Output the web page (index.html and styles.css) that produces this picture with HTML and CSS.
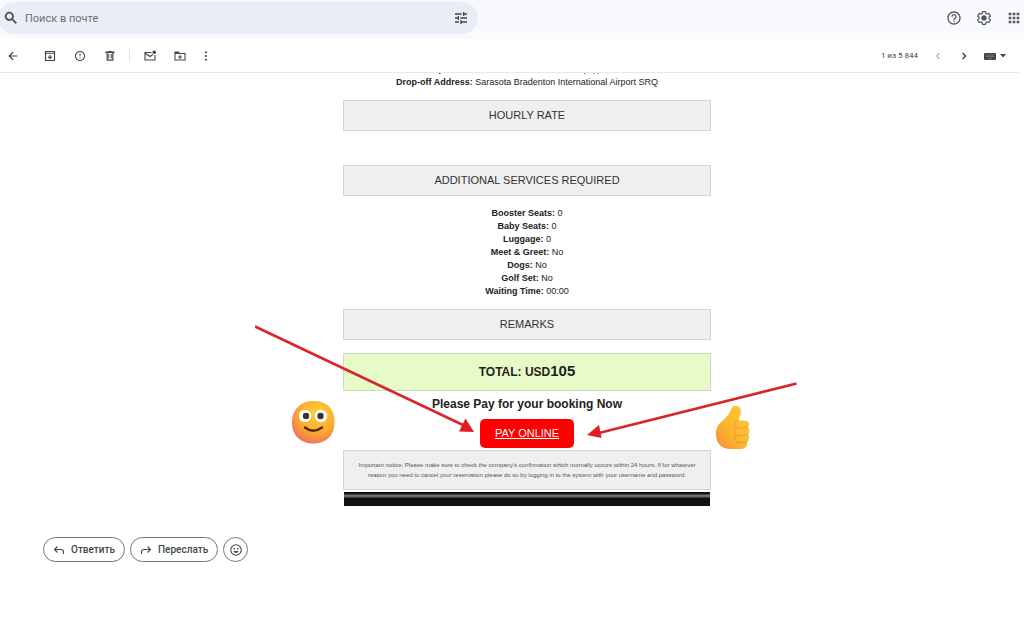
FILE: index.html
```
<!DOCTYPE html>
<html lang="ru">
<head>
    <meta charset="UTF-8">
    <meta name="viewport" content="width=device-width, initial-scale=1.0">
    <title>Почта</title>
    <link rel="stylesheet" href="styles.css">
</head>
<body>
    <header class="header">
        <form class="search" role="search">
            <button type="submit" class="icon-btn" aria-label="Поиск">
                <svg class="icon-lg" viewBox="0 0 24 24"><path d="M15.5 14h-.79l-.28-.27A6.47 6.47 0 0 0 16 9.5 6.5 6.5 0 1 0 9.5 16c1.61 0 3.09-.59 4.23-1.57l.27.28v.79l5 4.99L20.49 19l-4.99-5zm-6 0C7.01 14 5 11.99 5 9.5S7.01 5 9.5 5 14 7.01 14 9.5 11.99 14 9.5 14z" stroke="currentColor" stroke-width=".6"/></svg>
            </button>
            <input type="search" class="search-input" placeholder="Поиск в почте" aria-label="Поиск в почте">
            <button type="button" class="icon-btn" aria-label="Параметры поиска">
                <svg class="icon-lg" viewBox="0 0 24 24"><path d="M3 17v2h6v-2H3zM3 5v2h10V5H3zm10 16v-2h8v-2h-8v-2h-2v6h2zM7 9v2H3v2h4v2h2V9H7zm14 4v-2H11v2h10zm-6-4h2V7h4V5h-4V3h-2v6z"/></svg>
            </button>
        </form>
        <nav class="header-icons">
            <button type="button" class="icon-btn" aria-label="Поддержка">
                <svg class="icon-lg" viewBox="0 0 24 24"><path d="M11 18h2v-2h-2v2zm1-16C6.480 2 2 6.480 2 12s4.480 10 10 10 10-4.480 10-10S17.520 2 12 2zm0 18c-4.410 0-8-3.590-8-8s3.590-8 8-8 8 3.590 8 8-3.590 8-8 8zm0-14c-2.210 0-4 1.790-4 4h2c0-1.100.9-2 2-2s2 .9 2 2c0 2-3 1.750-3 5h2c0-2.250 3-2.500 3-5 0-2.210-1.790-4-4-4z"/></svg>
            </button>
            <button type="button" class="icon-btn" aria-label="Настройки">
                <svg class="icon-lg" viewBox="0 0 24 24"><path d="M9.500 2.500h5l.6 3 1.900 1.100 2.900-1 2.500 4.300-2.300 2v2.200l2.300 2-2.500 4.300-2.900-1-1.900 1.100-.6 3h-5l-.6-3L7 19.400l-2.900 1-2.500-4.300 2.300-2v-2.200l-2.300-2L4.100 5.600l2.900 1 1.900-1.100z" transform="translate(1 0) scale(.92)" fill="none" stroke="currentColor" stroke-width="2" stroke-linejoin="round"/><circle cx="12" cy="12" r="4"/></svg>
            </button>
            <button type="button" class="icon-btn" aria-label="Приложения">
                <svg class="icon-lg" viewBox="0 0 24 24"><path d="M4 8h4V4H4v4zm6 12h4v-4h-4v4zm-6 0h4v-4H4v4zm0-6h4v-4H4v4zm6 0h4v-4h-4v4zm6-10v4h4V4h-4zm-6 4h4V4h-4v4zm6 6h4v-4h-4v4zm0 6h4v-4h-4v4z"/></svg>
            </button>
        </nav>
    </header>

    <div class="toolbar">
        <button type="button" class="icon-btn back" aria-label="Назад">
            <svg class="icon" viewBox="0 0 24 24"><path d="M21 12H5M12 4.500L4.500 12l7.500 7.500" fill="none" stroke="currentColor" stroke-width="2.400"/></svg>
        </button>
        <button type="button" class="icon-btn" aria-label="Архивировать">
            <svg class="icon" viewBox="0 0 24 24"><path d="M3 3h18v18H3z M3 6.500h18M12 10v7M8.500 13.500l3.500 3.500 3.500-3.500" fill="none" stroke="currentColor" stroke-width="2.400"/></svg>
        </button>
        <button type="button" class="icon-btn" aria-label="В спам">
            <svg class="icon" viewBox="0 0 24 24"><path d="M11 15h2v2h-2v-2zm0-8h2v6h-2V7zm1-5C6.470 2 2 6.500 2 12s4.470 10 10 10 10-4.480 10-10S17.520 2 12 2zm0 18c-4.420 0-8-3.580-8-8s3.580-8 8-8 8 3.580 8 8-3.580 8-8 8z"/></svg>
        </button>
        <button type="button" class="icon-btn" aria-label="Удалить">
            <svg class="icon" viewBox="0 0 24 24"><path d="M15 3V2H9v1H3v3h2v13c0 1.500 1 2.500 2.500 2.500h9c1.500 0 2.500-1 2.500-2.500V6h2V3h-6zm1.500 16h-9V6h9v13zM8.500 8h2v9h-2zm5 0h2v9h-2z"/></svg>
        </button>
        <span class="divider"></span>
        <button type="button" class="icon-btn" aria-label="Отметить как непрочитанное">
            <svg class="icon" viewBox="0 0 24 24"><path d="M15 5H2v15h20V10M3 7l9 6 6-4" fill="none" stroke="currentColor" stroke-width="2.200"/><circle cx="20.500" cy="4.500" r="3.500"/></svg>
        </button>
        <button type="button" class="icon-btn" aria-label="Переместить">
            <svg class="icon" viewBox="0 0 24 24"><path d="M2 4h7l2 3h11v13H2z" fill="none" stroke="currentColor" stroke-width="2.200"/><path d="M2 4h7l2 4H2zM11 10h2v3h3v2h-3v3h-2v-3H8v-2h3z"/></svg>
        </button>
        <button type="button" class="icon-btn more" aria-label="Ещё">
            <svg class="icon" viewBox="0 0 24 24"><circle cx="12" cy="4.500" r="2.200"/><circle cx="12" cy="12" r="2.200"/><circle cx="12" cy="19.500" r="2.200"/></svg>
        </button>

        <div class="pager">
            <span>1 из 5 844</span>
            <button type="button" class="icon-btn" aria-label="Предыдущее" disabled>
                <svg class="icon" viewBox="0 0 24 24"><path d="M15 6l-6 6 6 6" fill="none" stroke="currentColor" stroke-width="2.200"/></svg>
            </button>
            <button type="button" class="icon-btn" aria-label="Следующее">
                <svg class="icon" viewBox="0 0 24 24"><path d="M9 6l6 6-6 6" fill="none" stroke="currentColor" stroke-width="3"/></svg>
            </button>
            <button type="button" class="icon-btn keyboard" aria-label="Способ ввода">
                <svg width="12" height="8" viewBox="0 0 12 8"><rect width="12" height="7" y="1" rx="1"/><path d="M2 3h8M2 4.500h8M4 6.500h4" stroke="#999" stroke-width=".5"/></svg>
                <svg width="6" height="4" viewBox="0 0 6 4"><path d="M0 0h6L3 3.500z"/></svg>
            </button>
        </div>
    </div>

    <main class="content">
        <article class="mail">
            <p class="details">
                <b>Drop-off Date and Time:</b> 28 мая, 25 середа, 05:00<br>
                <b>Drop-off Address:</b> Sarasota Bradenton International Airport SRQ
            </p>

            <h2 class="section">HOURLY RATE</h2>
            <p class="empty"></p>

            <h2 class="section">ADDITIONAL SERVICES REQUIRED</h2>
            <p class="details">
                <b>Booster Seats:</b> 0<br>
                <b>Baby Seats:</b> 0<br>
                <b>Luggage:</b> 0<br>
                <b>Meet &amp; Greet:</b> No<br>
                <b>Dogs:</b> No<br>
                <b>Golf Set:</b> No<br>
                <b>Waiting Time:</b> 00:00
            </p>

            <h2 class="section">REMARKS</h2>
            <p class="total">TOTAL: USD<span class="amount">105</span></p>

            <p class="pay-title">Please Pay for your booking Now</p>
            <a href="#" class="pay-btn">PAY ONLINE</a>

            <p class="notice">Important notice: Please make sure to check the company's confirmation which normally occurs within 24 hours. If for whatever reason you need to cancel your reservation please do so by logging in to the system with your username and password.</p>
            <div class="footer-bar"></div>

            <!-- arrows and emoji over the letter -->
            <svg class="marks" width="552" height="136" viewBox="0 0 552 136">
                <defs>
                    <radialGradient id="face" cx="60%" cy="30%" r="75%">
                        <stop offset="0" stop-color="#ffd03c"/>
                        <stop offset=".6" stop-color="#fbaa2c"/>
                        <stop offset="1" stop-color="#ee6f62"/>
                    </radialGradient>
                    <linearGradient id="thumb" x1="0" y1="1" x2="1" y2="0">
                        <stop offset="0" stop-color="#f28a3c"/>
                        <stop offset=".4" stop-color="#fbb52c"/>
                        <stop offset="1" stop-color="#ffcd40"/>
                    </linearGradient>
                </defs>
                <g transform="translate(0 -4)">
                    <path d="M58.500 81C71 81 79.500 88 79.500 102S71 123.500 58.500 123.500 37 116 37 102.500 46 81 58.500 81z" fill="url(#face)"/>
                    <circle cx="50" cy="96" r="6.200" fill="#fff"/>
                    <circle cx="66" cy="96" r="6.200" fill="#fff"/>
                    <circle cx="51" cy="96" r="3.200" fill="#40302f"/>
                    <circle cx="65.500" cy="96" r="3.200" fill="#40302f"/>
                    <path d="M50 107.500q8 6.500 17 0" fill="none" stroke="#51291c" stroke-width="2.500" stroke-linecap="round"/>
                </g>

                <g transform="translate(0 -4)">
                    <path d="M476 89c2-5 10-4 10 2 0 4-2 7-2 9.500h5c5 0 6.500 4 4 6.500 2 2 2 5 0 7.500 2 2 1 5.500-1 7.500 1 4-2 7-6 7h-10c-10 0-15-6-15-15 0-13 11-13 15-25z" fill="url(#thumb)"/>
                    <path d="M481 107.500c3 .8 8 .8 11-.5M481 115c3 .8 8 .8 11-.5M482 122.500c3 .5 6 .5 9-.5M483 100.500c-4 1-4 5-2 7-3 2-2 6 0 7.500-2 2-1 6 1 7.500" fill="none" stroke="#ee9a30" stroke-width="1" stroke-linecap="round"/>
                </g>

                <path d="M0 2.500L208 101" stroke="#d9252a" stroke-width="2.500"/>
                <path d="M219 108l-15-.5 6.500-13z" fill="#e01e22"/>
                <path d="M541.500 59.500L344 109" stroke="#d9252a" stroke-width="2.500"/>
                <path d="M332 111l12-10 2.500 13z" fill="#e01e22"/>
            </svg>
        </article>

        <div class="actions">
            <button type="button" class="action-btn">
                <svg class="icon" viewBox="0 0 24 24"><path d="M9 5l-6 6 6 6M3 11h13c3 0 5 2 5 5v4" fill="none" stroke="currentColor" stroke-width="2.200"/></svg>
                Ответить
            </button>
            <button type="button" class="action-btn">
                <svg class="icon" viewBox="0 0 24 24"><path d="M15 5l6 6-6 6M21 11H8c-3 0-5 2-5 5v4" fill="none" stroke="currentColor" stroke-width="2.200"/></svg>
                Переслать
            </button>
            <button type="button" class="action-btn round" aria-label="Добавить реакцию">
                <svg class="icon" viewBox="0 0 24 24"><circle cx="12" cy="12" r="10.500" fill="none" stroke="currentColor" stroke-width="2.200"/><circle cx="8.500" cy="9.500" r="1.700"/><circle cx="15.500" cy="9.500" r="1.700"/><path d="M7 14h10c-1 5-9 5-10 0z"/></svg>
            </button>
        </div>
    </main>
</body>
</html>
```
FILE: styles.css
```
* {
    box-sizing: border-box;
}

body {
    margin: 0;
    height: 100vh;
    display: flex;
    flex-direction: column;
    overflow: hidden;
    background: #fff;
    color: #444746;
    font-family: Roboto, Arial, sans-serif;
}

p, h2 {
    margin: 0;
}

svg {
    display: block;
    fill: currentColor;
}

.icon {
    width: 12px;
    height: 12px;
}

.icon-lg {
    width: 16px;
    height: 16px;
}

.icon-btn {
    display: flex;
    align-items: center;
    padding: 0;
    border: none;
    background: none;
    color: inherit;
    cursor: pointer;
}

.icon-btn:disabled {
    color: #b0b3b3;
}

/* header */
.header {
    display: flex;
    justify-content: space-between;
    align-items: center;
    padding: 2px 2px 5px 0;
    background: #f8fafd;
    color: #55595c;
}

.search {
    display: flex;
    align-items: center;
    gap: 6px;
    width: 47%;
    height: 32px;
    margin-left: -2px;
    padding: 0 9px 0 5px;
    border-radius: 16px;
    background: #e9eef6;
    color: #444746;
}

.search-input {
    flex: 1;
    min-width: 0;
    padding: 0;
    border: none;
    outline: none;
    background: none;
    font-family: inherit;
    font-size: 11px;
}

.search-input::placeholder {
    color: #6b6f73;
}

.header-icons {
    display: flex;
    gap: 14px;
}

/* toolbar */
.toolbar {
    display: flex;
    align-items: center;
    gap: 18px;
    height: 34px;
    margin-right: 5px;
    padding: 0 13px 0 7px;
    border-bottom: 1px solid #e6e8ea;
}

.back {
    margin-right: 7px;
}

.divider {
    width: 1px;
    height: 13px;
    margin: 0 -4px 0 -5px;
    background: #e3e5e7;
}

.more {
    margin-left: -4px;
}

.pager {
    display: flex;
    align-items: center;
    gap: 14px;
    margin-left: auto;
    color: #444746;
    font-size: 8px;
}

.keyboard {
    gap: 4px;
}

/* letter */
.content {
    flex: 1;
    overflow: hidden;
}

.mail {
    width: calc(100% - 30px);
    max-width: 368px;
    position: relative;
    left: 15px;
    margin: -10px auto 0;
    color: #222;
    font-family: Arial, "Liberation Sans", sans-serif;
    text-align: center;
}

.details {
    font-size: 9px;
    line-height: 13px;
}

.empty {
    height: 12px;
}

.section {
    margin: 11px 0;
    padding: 7px;
    border: 1px solid #d5d5d5;
    background: #efefef;
    color: #333;
    font-size: 11px;
    font-weight: normal;
    line-height: 15px;
}

.total {
    margin-top: 13px;
    padding: 9px;
    border: 1px solid #d0d8c4;
    background: #e7fbc8;
    font-size: 12px;
    font-weight: bold;
    line-height: 17px;
}

.amount {
    font-size: 15px;
    line-height: 15px;
}

.pay-title {
    padding: 5px 0 7px;
    font-size: 12px;
    font-weight: bold;
    line-height: 16px;
}

.pay-btn {
    display: block;
    width: 94px;
    margin: 0 auto 2px;
    padding: 7px 0;
    border-radius: 5px;
    background: #f00;
    color: #fff;
    font-size: 11px;
    line-height: 15px;
}

.notice {
    padding: 9px 12px;
    border: 1px solid #d5d5d5;
    background: #efefef;
    color: #555;
    font-size: 6px;
    line-height: 10px;
}

.footer-bar {
    height: 14px;
    margin: 2px 1px 0;
    background: linear-gradient(#111 2px, #777 3px, #666 5px, #111 6px);
}

.marks {
    position: absolute;
    left: -88px;
    bottom: 46px;
    pointer-events: none;
}

/* reply buttons */
.actions {
    display: flex;
    gap: 5px;
    padding: 31px 43px;
}

.action-btn {
    display: flex;
    align-items: center;
    gap: 6px;
    height: 25px;
    padding: 0 9px;
    border: 1px solid #747775;
    border-radius: 13px;
    background: #fff;
    color: #444746;
    font-family: inherit;
    font-size: 10px;
    font-weight: 500;
    cursor: pointer;
}

.round {
    width: 25px;
    padding: 0;
    justify-content: center;
}
```
